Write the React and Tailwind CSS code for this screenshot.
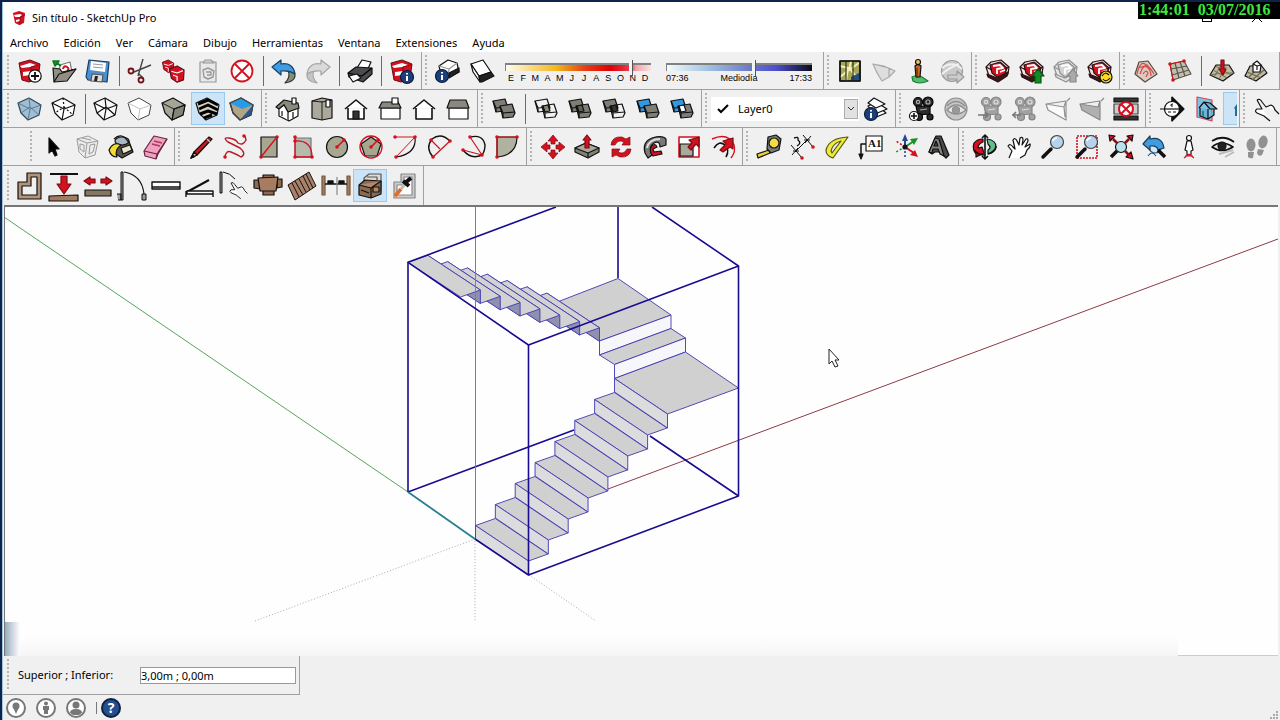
import { useState } from 'react'
import clsx from 'clsx'

const RED = '#d3111f'

const cube = 'M5 11 16 6 28 13 26 23 15 28 8 21Z'
const cubeEdges = 'M5 11 17 17 28 13M17 17 15 28'
const cubeBack = 'M16 6 17 15 8 21M17 15 26 23'
const house = 'M6 17 17 8 28 17M9 16V27H25V16'

function Logo() {
  return (
    <g>
      <path d="M6 9 17 6 27 10 25 25 16 28 9 26Z" fill={RED} stroke="#5d1217" strokeWidth="1" />
      <path d="M7 12 17 9 23 11 17 13 9 14ZM10 18 18 17 18 21 10 22Z" fill="#fff" stroke="none" />
      <path d="M18 13 26 11M18 13V27" stroke="#8f0d17" />
    </g>
  )
}

function SmallLogo({ x, y, size }) {
  return (
    <g transform={`translate(${x} ${y}) scale(${size})`}>
      <path d="M1 5 14 0 26 7 25 24 14 28 4 21Z" fill={RED} stroke="#5d1217" strokeWidth="2" />
      <path d="M4 9 14 12 24 8M7 16 14 18V26" stroke="#fff" strokeWidth="2" />
    </g>
  )
}

function InfoBadge({ x, y }) {
  return (
    <g>
      <circle cx={x} cy={y} r="6.5" fill="#1c3f7c" stroke="#0c1b38" />
      <path d={`M${x} ${y - 1}v5M${x} ${y - 4}v1.6`} stroke="#fff" strokeWidth="2" />
    </g>
  )
}

function Package({ muted }) {
  return (
    <g stroke={muted ? '#8f8f8f' : '#2a1113'}>
      <path d="M5 13 10 8 20 6 28 13 27 20 17 27 8 22Z" fill={muted ? '#e6e6e6' : '#f3e4e4'} />
      <path d="M9 11 19 8 26 14 24 20 16 23 11 19Z" fill={muted ? '#d3d3d3' : RED} />
      <path d="M12 12 19 11 22 14 16 15V20M19 18 24 16" stroke="#fff" strokeWidth="1.8" />
      <path d="M6 20 16 24 27 18 26 22 17 28 7 23Z" fill={muted ? '#ddd' : '#3b1517'} />
      <path d="M5 13 11 16M28 13 24 15" />
    </g>
  )
}

function CameraMan({ muted }) {
  const fill = muted ? '#a2a2a2' : '#2b2b2b'
  return (
    <g fill={fill} stroke={muted ? '#858585' : '#000'}>
      <circle cx="13" cy="10" r="4.5" />
      <circle cx="23" cy="10" r="5" />
      <path d="M11 14 25 14 25 22 13 23Z" />
      <circle cx="14" cy="25" r="3.5" />
      <circle cx="25" cy="25" r="3" />
      <circle cx="13" cy="10" r="1.6" stroke={muted ? '#ddd' : '#aaa'} />
      <circle cx="23" cy="10" r="2" stroke={muted ? '#ddd' : '#aaa'} />
      <path d="M15 18 22 17" stroke={muted ? '#ddd' : '#aaa'} />
    </g>
  )
}

function Dots({ points }) {
  return points.map(([x, y]) => <circle key={`${x}-${y}`} cx={x} cy={y} r="1.8" fill={RED} stroke="none" />)
}

function Magnifier() {
  return (
    <g>
      <path d="M15 19 7 27" strokeWidth="3.5" strokeLinecap="round" />
      <circle cx="21" cy="12" r="6.5" fill="#b5d3ec" stroke="#444" />
      <path d="M17 11q1-3 4-3" stroke="#fff" strokeWidth="1.6" />
    </g>
  )
}

function SolidPair({ back, front, union }) {
  return (
    <g>
      <path d="M6 9 18 7 21 16 18 19 9 20Z" fill={back} />
      <path d="M6 9 9 16 21 15M9 16V20" />
      <path d="M13 14 25 12 28 21 26 25 16 26Z" fill={front} />
      <path d="M13 14 16 21 28 20M16 21V26" />
      {union && <path d="M14 14 19 13 21 19 16 20Z" fill={union} />}
    </g>
  )
}

const HAND = 'M7 28 10 21 6 16Q8 13 11 17L13 19 11 10Q13 7 15 11L17 15 18 8Q21 6 21 10L20 15 24 9Q26 8 26 11L23 17 28 14Q29 17 25 20L23 25 18 28'
const POINT_HAND = 'M8 8Q11 6 13 10L17 15 22 13Q25 14 26 18L30 22M8 8 13 17 8 17Q5 19 8 21L15 24 21 29'

const ICONS = {
  new: (
    <>
      <Logo />
      <circle cx="22" cy="22" r="6.2" fill="#fff" />
      <path d="M22 18v8M18 22h8" strokeWidth="1.8" />
    </>
  ),
  open: (
    <>
      <path d="M13 11 23 8 25 18 12 20Z" fill="#fff" stroke="#777" />
      <path d="M16 15Q17 11 20 13T20 17" stroke={RED} strokeWidth="2" />
      <path d="M6 14 13 15 15 18 29 15 20 27 7 28Z" fill="#918f84" />
      <path d="M7 28 12 20 29 15" />
      <path d="M14 12 10 9M6 7 12 7 8 12Z" fill="#169c2c" stroke="#0d7a1f" strokeWidth="1.6" />
    </>
  ),
  save: (
    <>
      <path d="M8 6 28 8 26 28 7 26 5 23Z" fill="#4d90d0" stroke="#173a63" />
      <path d="M10 7 25 9 24 18 9 16Z" fill="#fff" stroke="none" />
      <path d="M12 10 22 11M12 13 22 14" stroke="#999" />
      <path d="M11 20 22 21 21 28 10 27Z" fill="#ddd" stroke="#555" />
      <path d="M14 22 17 22 16 27 13 27Z" fill="#222" stroke="none" />
    </>
  ),
  cut: (
    <>
      <path d="M20 5 15 22M28 11 11 18M15 19 20 24" stroke="#444" strokeWidth="1.4" />
      <circle cx="8" cy="17" r="2.5" stroke="#741018" strokeWidth="1.8" />
      <circle cx="18" cy="26" r="2.5" stroke="#741018" strokeWidth="1.8" />
    </>
  ),
  copy: (
    <>
      <SmallLogo x="5" y="6" size="0.45" />
      <SmallLogo x="12" y="12" size="0.58" />
    </>
  ),
  paste: (
    <g stroke="#999">
      <path d="M9 8H25V28H9Z" fill="#e8e8e8" />
      <path d="M12 9 14 6H20L23 9Z" fill="#ccc" />
      <path d="M12 16 17 14 23 17 22 23 17 25 13 23ZM15 18 20 18V21L16 21" strokeWidth="1.4" />
    </g>
  ),
  erase: (
    <g stroke={RED} strokeWidth="1.8">
      <circle cx="17" cy="17" r="10.5" fill="#fff" />
      <path d="M10 10 24 24M24 10 10 24" />
    </g>
  ),
  undo: (
    <>
      <path d="M27 17Q31 27 18 29 24 23 21 16Z" fill="#7f9176" stroke="#333" />
      <path d="M5 13 14 6V10Q26 8 28 20 22 16 14 17V21Z" fill="#3f9be2" stroke="#174064" />
    </>
  ),
  redo: (
    <>
      <path d="M7 17Q3 27 16 29 10 23 13 16Z" fill="#c5c5c5" stroke="#a5a5a5" />
      <path d="M29 13 20 6V10Q8 8 6 20 12 16 20 17V21Z" fill="#dadada" stroke="#a5a5a5" />
    </>
  ),
  print: (
    <>
      <path d="M14 14 19 6 28 8 24 17Z" fill="#fff" />
      <path d="M5 19 13 13 29 14V20L20 28 6 23Z" fill="#4b4b50" />
      <path d="M5 19 19 22 29 14" stroke="#000" />
      <path d="M6 22 14 20 18 24 10 28Z" fill="#fff" />
    </>
  ),
  modelInfo: (
    <>
      <Logo />
      <InfoBadge x={22} y={23} />
    </>
  ),
  shadowInfo: (
    <>
      <path d="M8 12 17 6 26 9 28 18 17 23 10 20Z" fill="#fff" />
      <path d="M8 12 18 15 26 9M18 15 17 23" stroke="#999" />
      <path d="M18 19 28 14 28 18 18 24Z" fill="#222" />
      <InfoBadge x={11} y={22} />
    </>
  ),
  shadow: (
    <>
      <path d="M6 10 18 6 26 18 14 22Z" fill="#fff" />
      <path d="M6 10 14 22 15 28 8 18Z" fill="#fff" />
      <path d="M14 22 26 18 29 22 17 28 15 28Z" fill="#222" />
    </>
  ),
  map: (
    <>
      <path d="M7 7H27V27H7Z" fill="#a5a757" />
      <path d="M7 23 17 15 26 26M18 7 16 16 26 9M7 12 15 14 13 27" stroke="#f1efb5" strokeWidth="2" />
      <path d="M18 23 26 19V27H18Z" fill="#254f80" stroke="none" />
      <path d="M13 7V27M20 7V27" stroke="#303120" />
      <path d="M7 7H27V27H7Z" strokeWidth="1.6" />
    </>
  ),
  terrain: <path d="M6 10 17 12 28 17 22 23 15 27Q9 18 6 10ZM6 10 22 14 28 17M22 14 22 23" fill="#dedede" stroke="#aaa" />,
  photo: (
    <>
      <path d="M11 23Q16 20 21 23L27 27Q18 31 12 27Z" fill="#51bd6d" stroke="#167d34" />
      <circle cx="17" cy="8" r="2.5" fill="#efc26b" />
      <path d="M14 12Q17 9 20 12L19 23H15Z" fill="#c96523" />
      <path d="M16 14V24" stroke="#612d0a" />
    </>
  ),
  earth: (
    <g stroke="#999">
      <circle cx="17" cy="17" r="10.5" fill="#cacaca" />
      <path d="M7 14Q17 6 27 15M7 20Q15 13 24 10" stroke="#f0f0f0" strokeWidth="2" />
      <path d="M13 21H22V17L29 23 22 29V25H13Z" fill="#ccc" />
    </g>
  ),
  getModels: <Package />,
  shareModel: (
    <>
      <Package />
      <path d="M20 29V22H17L23 15 29 22H26V29Z" fill="#118c25" stroke="#075714" />
    </>
  ),
  shareComponent: (
    <>
      <Package muted />
      <path d="M21 28V22H18L24 15 29 22H27V28Z" fill="#aaa" stroke="#888" />
    </>
  ),
  extensionWarehouse: (
    <>
      <Package />
      <circle cx="23" cy="23" r="6" fill="#ffda24" />
      <path d="M19 22Q22 17 26 21M27 24Q23 29 20 25" />
    </>
  ),
  contours: (
    <>
      <path d="M6 20 10 8 19 7 28 20 16 28Z" fill="#d8cdbd" stroke="#5b4640" />
      <path d="M8 20Q11 7 16 10T25 20M11 20Q14 10 18 13T22 22M14 20Q17 15 19 19L17 23M9 14 19 11" stroke="#d6464d" strokeWidth="1.2" />
    </>
  ),
  scratch: (
    <>
      <path d="M7 10 21 7 28 20 10 26Z" fill="#c3bfa8" stroke="#555" />
      <path d="M12 9 16 24M17 8 22 22M8 15 24 12M9 21 26 16" stroke="#555" />
      <path d="M10 26 7 10 21 7" stroke={RED} />
      <Dots points={[[7, 10], [21, 7], [10, 26]]} />
    </>
  ),
  stamp: (
    <>
      <path d="M5 21 11 11 24 11 29 19 18 27Z" fill="#bfb99d" />
      <path d="M9 23 16 11M14 25 21 13M8 16 22 24M11 12 26 21M5 21 17 19 29 19" stroke="#6c6957" strokeWidth="0.9" />
      <path d="M16 6H19V15H21L18 21 14 15H16Z" fill={RED} stroke="#7d0d14" />
    </>
  ),
  drape: (
    <>
      <path d="M6 22 11 12 22 11 28 19 17 27Z" fill="#bfb99d" />
      <path d="M9 24 16 17M13 26 25 16M8 18 22 24" stroke="#6c6957" />
      <path d="M14 18 14 10 18 7 22 11 21 18Z" fill="#fff" />
      <path d="M14 10 18 12 22 11M18 12V16" />
    </>
  ),
  xray: (
    <>
      <path d={cube} fill="#9fbed5" stroke="#2d4658" />
      <path d={`${cubeEdges}${cubeBack}`} stroke="#557286" strokeWidth="0.9" />
    </>
  ),
  backEdges: (
    <>
      <path d={cube} fill="#fff" />
      <path d={cubeEdges} />
      <path d={cubeBack} strokeDasharray="2 2" />
    </>
  ),
  wireframe: (
    <>
      <path d={cube} fill="#fafafa" />
      <path d={`${cubeEdges}${cubeBack}`} />
    </>
  ),
  hiddenLine: (
    <>
      <path d={cube} fill="#fff" stroke="#444" strokeWidth="1" />
      <path d={cubeEdges} stroke="#bbb" strokeWidth="0.9" />
    </>
  ),
  shaded: (
    <>
      <path d={cube} fill="#a5a496" />
      <path d="M17 17 28 13 26 23 15 28Z" fill="#84837a" />
      <path d={cubeEdges} strokeWidth="0.9" />
    </>
  ),
  textured: (
    <>
      <path d={cube} fill="#d5d0c4" />
      <path d="M7 12 17 8 27 13M8 17 17 13 27 18M9 22 17 19 26 22M13 26 21 23" stroke="#000" strokeWidth="3" />
    </>
  ),
  monochrome: (
    <>
      <path d={cube} fill="#b3a584" />
      <path d="M5 11 16 6 28 13 17 17Z" fill="#289be8" stroke="none" />
      <path d="M28 13 26 23 15 28Z" fill="#275b91" stroke="none" />
      <path d={cube} stroke="#3d4954" />
    </>
  ),
  iso: (
    <>
      <path d="M8 17 17 20 27 15V24L18 29 8 24Z" fill="#fff" />
      <path d="M5 15 13 8 27 11 28 16 17 20 13 13 8 17Z" fill="#8a897f" />
      <path d="M8 17 13 13 17 20V29M21 6H25V12H21ZM11 19V24M22 20V26" fill="#fff" />
    </>
  ),
  top: (
    <>
      <path d="M7 9 17 6 27 8V26L17 28 7 26Z" fill="#aaa99b" />
      <path d="M17 9V28M7 9 17 10 27 8" strokeWidth="0.9" />
      <path d="M21 8H25V15H21Z" fill="#fff" />
    </>
  ),
  front: (
    <>
      <path d={house} fill="#fff" strokeWidth="1.6" />
      <path d="M14 19H20V27H14Z" fill="#333" />
    </>
  ),
  right: (
    <>
      <path d="M8 16H27V27H8Z" fill="#fff" />
      <path d="M9 10H25L28 16H6Z" fill="#8a897f" />
      <path d="M19 6H25V12H19Z" fill="#fff" />
    </>
  ),
  back: <path d={house} fill="#fff" strokeWidth="1.6" />,
  left: (
    <>
      <path d="M8 16H27V27H8Z" fill="#fff" />
      <path d="M9 8H25L28 16H6Z" fill="#8a897f" />
    </>
  ),
  outerShell: <SolidPair back="#7f7e76" front="#7f7e76" />,
  intersect: <SolidPair back="none" front="none" union="#88877e" />,
  union: <SolidPair back="#7f7e76" front="#7f7e76" union="#63625b" />,
  subtract: <SolidPair back="#7f7e76" front="none" union="#333" />,
  trim: <SolidPair back="#3398e0" front="#7f7e76" />,
  split: <SolidPair back="#3398e0" front="#7f7e76" union="#fff" />,
  layers: (
    <>
      <path d="M9 18 19 14 27 21 15 26Z" fill="#fff" />
      <path d="M9 14 17 10 28 17 16 22Z" fill="#fff" />
      <path d="M9 11 15 6 26 12 17 16Z" fill="#fff" />
      <InfoBadge x={12} y={22} />
    </>
  ),
  cameraAdd: (
    <>
      <CameraMan />
      <circle cx="9" cy="24" r="4.5" fill="#fff" />
      <path d="M9 21v6M6 24h6" strokeWidth="1.6" />
    </>
  ),
  cameraLook: (
    <g stroke="#8f8f8f">
      <circle cx="17" cy="17" r="11" fill="#c6c6c6" />
      <path d="M8 18Q17 8 27 18Q17 26 8 18Z" fill="#e5e5e5" strokeWidth="1.6" />
      <circle cx="17" cy="18" r="3.5" fill="#999" />
      <path d="M8 14Q17 5 26 14" strokeWidth="1.6" />
    </g>
  ),
  cameraTrack: (
    <>
      <CameraMan muted />
      <path d="M5 23H14M12 20 15 23 12 26" stroke="#777" strokeWidth="1.6" />
    </>
  ),
  cameraRoll: (
    <>
      <CameraMan muted />
      <path d="M5 23H14M9 20 6 23 9 26" stroke="#777" strokeWidth="1.6" />
    </>
  ),
  frustum: <path d="M5 12 25 9 25 28 7 18ZM5 12 23 15 25 9M23 15 24 25M26 9 29 6" fill="#fafafa" stroke="#909090" />,
  frustumSolid: <path d="M5 12 25 9 25 28 7 18ZM26 9 29 6M5 12 23 15 25 9" fill="#b0b0b0" stroke="#888" />,
  cameraClear: (
    <>
      <path d="M5 6H29V10H5ZM5 24H29V28H5Z" fill="#333" />
      <path d="M5 12H11V22H5ZM23 12H29V22H23Z" fill="#ccc" stroke="#444" />
      <circle cx="17" cy="17" r="7" fill="#fff" stroke={RED} strokeWidth="2" />
      <path d="M12 12 22 22M22 12 12 22" stroke={RED} strokeWidth="2" />
    </>
  ),
  section: (
    <>
      <path d="M17 5 29 17 17 29Z" fill="#111" />
      <path d="M17 5V29M5 17H29" />
      <circle cx="17" cy="17" r="7.5" fill="#fff" />
      <path d="M9 17H25" />
      <path d="M18 12Q15 12 16 14H18M13 20h3M18 20h3" strokeWidth="1" />
    </>
  ),
  sectionPlanes: (
    <>
      <path d="M8 5 23 8V29L8 25Z" fill="#7fc3e4" stroke="#d04a5c" />
      <path d="M10 16 15 10 21 17 28 17 21 11 15 10M11 16V24L19 27V17M25 17V23L19 27" fill="#69b4da" />
      <path d="M14 19V25" stroke="#1d4d66" />
    </>
  ),
  pointHand: <path d={POINT_HAND} fill="#fff" />,
  select: <path d="M13 8V23L16 20 19 26 21 25 19 19H23Z" fill="#000" />,
  component: (
    <g stroke="#9b9b9b" strokeWidth="1">
      <path d="M7 9 18 6 28 11 25 25 15 28 9 22Z" fill="#ececec" />
      <path d="M7 9 17 13 28 11M17 13 15 28M10 14V19L14 22V15ZM20 15 25 14 23 22 19 24ZM12 8 21 10" />
    </g>
  ),
  paint: (
    <>
      <path d="M12 12 24 9 29 22 18 28 12 24Z" fill="#55554d" />
      <ellipse cx="18" cy="11" rx="7" ry="4" fill="#a9b7c4" />
      <path d="M17 18 26 15 28 20 19 24Z" fill="#eae7ca" />
      <path d="M5 20Q9 11 17 15 10 20 13 27 7 27 5 20Z" fill="#f3dc32" />
      <path d="M10 9Q18 1 25 13" />
    </>
  ),
  eraser: (
    <>
      <path d="M6 21 16 6 29 9 20 24 18 29 7 26Z" fill="#f3a0c0" stroke="#63263d" />
      <path d="M6 21 19 24 29 9M19 24 18 29" stroke="#63263d" />
      <path d="M16 11 24 13M14 14 22 16" stroke="#a63863" strokeWidth="1.4" />
    </>
  ),
  pencil: (
    <>
      <path d="M7 28 10 22 25 7 28 9 13 25Z" fill={RED} />
      <path d="M7 28 10 22 13 25Z" fill="#d9bb86" />
      <path d="M7 28 9 25 10 27Z" fill="#111" />
      <path d="M23 9 26 12" stroke="#f0b0b4" />
    </>
  ),
  freehand: (
    <>
      <path d="M7 27Q8 20 13 22T23 27Q29 24 22 18L10 12Q4 7 11 8T20 13Q25 16 28 10L27 6" stroke="#b71c28" strokeWidth="1.4" />
      <Dots points={[[7, 27], [26, 6]]} />
    </>
  ),
  rectangle: (
    <>
      <path d="M9 7H25V27H9Z" fill="#a7a791" />
      <path d="M9 27 25 7" stroke={RED} strokeWidth="1.4" />
      <Dots points={[[9, 27], [25, 7]]} />
    </>
  ),
  rotatedRectangle: (
    <>
      <path d="M9 8H25V27H9Z" fill="#b7b9ac" stroke="#777" />
      <path d="M9 7V27H26Q26 10 9 11" stroke={RED} strokeWidth="1.3" />
      <Dots points={[[9, 7], [9, 27], [26, 27], [9, 11]]} />
    </>
  ),
  circle: (
    <>
      <circle cx="17" cy="17" r="10.5" fill="#a7a791" />
      <path d="M17 17 24 10" stroke={RED} strokeWidth="1.6" />
      <Dots points={[[17, 17], [24, 10]]} />
    </>
  ),
  polygon: (
    <>
      <path d="M17 7 27 14 23 26H11L7 14Z" fill="#a7a791" />
      <circle cx="17" cy="17" r="11" stroke={RED} strokeWidth="1.3" />
      <path d="M17 17 24 10" stroke={RED} strokeWidth="1.6" />
      <Dots points={[[17, 17], [24, 10]]} />
    </>
  ),
  arc: (
    <>
      <path d="M27 7Q29 24 8 27" />
      <path d="M7 7H27L8 27" stroke={RED} strokeWidth="1" />
      <Dots points={[[7, 7], [27, 7], [8, 27]]} />
    </>
  ),
  arc2: (
    <>
      <path d="M11 27Q3 18 10 9Q19 2 28 11" strokeWidth="1.4" />
      <path d="M11 27 28 11M9 10 18 19" stroke={RED} strokeWidth="1.2" />
      <Dots points={[[11, 27], [28, 11], [9, 10]]} />
    </>
  ),
  arc3: (
    <>
      <path d="M14 7Q27 4 29 15 29 21 26 25 15 30 7 20" strokeWidth="1.4" />
      <path d="M14 7 26 25 7 20" stroke={RED} strokeWidth="1.2" />
      <Dots points={[[14, 7], [26, 25], [7, 20]]} />
    </>
  ),
  pie: (
    <>
      <path d="M7 7H27Q27 25 7 27Z" fill="#b1b1a0" />
      <path d="M7 27V7H27" stroke={RED} />
      <Dots points={[[7, 7], [27, 7], [7, 27]]} />
    </>
  ),
  move: (
    <path
      d="M17 5 22 11H19V14H15V11H12ZM17 29 12 23H15V20H19V23H22ZM5 17 11 12V15H14V19H11V22ZM29 17 23 22V19H20V15H23V12Z"
      fill={RED}
      stroke="#7d0d14"
      strokeWidth="0.7"
    />
  ),
  pushPull: (
    <>
      <path d="M5 18 16 13 29 18V22L18 28 5 22Z" fill="#818175" />
      <path d="M5 18 18 23 29 18L16 13ZM18 23V28" fill="#aaa99b" />
      <path d="M17 5 21 10H19V18H15V10H13Z" fill={RED} stroke="#7d0d14" />
    </>
  ),
  rotate: (
    <g fill={RED} stroke="#7d0d14" strokeWidth="0.7">
      <path d="M7 15Q8 6 18 7L22 9 26 7V15H18L20 12Q14 9 11 15Z" />
      <path d="M27 19Q26 28 16 27L12 25 8 27V19H16L14 22Q20 25 23 19Z" />
    </g>
  ),
  followMe: (
    <>
      <path d="M7 23Q4 12 14 8 25 5 28 9L28 15 22 17Q22 10 16 13 10 17 14 25L10 28Z" fill="#777a75" />
      <path d="M9 18Q11 9 22 9" stroke="#ddd" strokeWidth="2" />
      <path d="M13 17Q17 12 19 17L15 19 16 22 23 21 24 24 15 26Q11 22 13 17Z" fill={RED} />
    </>
  ),
  scale: (
    <>
      <path d="M7 7H27V27H7Z" fill="#fff" stroke={RED} strokeWidth="1.6" />
      <path d="M8 14H21V26H8Z" fill="#aaa99b" />
      <path d="M16 17 20 13 17 10 27 7V17L24 14 19 20Z" fill={RED} stroke="#7d0d14" />
    </>
  ),
  offset: (
    <>
      <path d="M6 9Q22 2 28 15 30 22 25 28" stroke={RED} strokeWidth="1.4" />
      <path d="M8 18Q13 10 19 15 24 20 20 27" strokeWidth="1.6" />
      <path d="M14 20 20 14 17 11 27 8V19L24 17 17 22Z" fill={RED} stroke="#7d0d14" />
    </>
  ),
  tape: (
    <>
      <path d="M6 28 5 24 17 20 18 23Z" fill="#e9cf35" />
      <path d="M16 7 24 5 29 9 27 20 19 23 15 19Z" fill="#777a7b" />
      <circle cx="22" cy="13" r="5" fill="#f2db47" />
    </>
  ),
  dimension: (
    <>
      <path d="M9 22 22 9M5 15 16 28M17 5 27 17M7 21H13M6 25 12 18M18 10H24M19 13 25 6" strokeWidth="1" />
      <path d="M8 8Q13 6 12 10 16 13 11 16" strokeWidth="1.4" />
      <Dots points={[[16, 28], [27, 17]]} />
    </>
  ),
  protractor: (
    <path d="M6 20Q9 8 28 7L13 28Q6 26 6 20ZM11 21Q13 13 21 11L12 23Z" fill="#eeec3b" fillRule="evenodd" stroke="#555512" />
  ),
  textLabel: (
    <>
      <path d="M12 6H28V21H12Z" fill="#fff" />
      <text x="14" y="17" fontSize="11" fontFamily="Liberation Serif" fontWeight="bold" fill="#111" stroke="none">A1</text>
      <path d="M12 14H7V25" strokeWidth="1.5" />
      <path d="M5 24H9L7 29Z" fill="#111" />
    </>
  ),
  axes: (
    <>
      <path d="M17 17V9" stroke="#244a96" strokeWidth="2" />
      <path d="M14 11 17 4 20 11Z" fill="#244a96" stroke="none" />
      <path d="M17 17 26 11" stroke="#14942b" strokeWidth="2" />
      <path d="M22 9 30 8 26 15Z" fill="#14942b" stroke="none" />
      <path d="M17 17 26 23" stroke={RED} strokeWidth="2" />
      <path d="M27 20 30 27 22 25Z" fill={RED} stroke="none" />
      <path d="M17 17V29" stroke="#244a96" strokeDasharray="2 2" strokeWidth="1.6" />
      <path d="M17 17 8 11" stroke={RED} strokeDasharray="2 2" strokeWidth="1.6" />
      <path d="M17 17 8 22" stroke="#14942b" strokeDasharray="2 2" strokeWidth="1.6" />
      <circle cx="17" cy="17" r="2" fill="#111" />
    </>
  ),
  text3d: (
    <>
      <path d="M7 22 14 6 19 6 27 25 24 28 18 22 13 22 10 24Z" fill="#4b4b4b" />
      <path d="M7 22 13 8 17 9 22 26 18 24 16 19 11 19 10 23ZM12 16 16 16 14 11Z" fill="#85857f" fillRule="evenodd" />
    </>
  ),
  orbit: (
    <>
      <path d="M6 13Q9 9 15 9V12Q10 14 10 18L14 17 16 23 8 27V24Q4 19 6 13Z" fill={RED} />
      <path d="M19 9Q28 10 28 17 27 23 20 24V20Q24 18 20 14Z" fill="#65bb8a" />
      <path d="M6 20Q10 25 17 25M28 16Q28 21 20 24" strokeWidth="1.6" />
      <path d="M17 5V29M14 8 17 5 20 8M14 26 17 29 20 26" strokeWidth="1.6" />
    </>
  ),
  pan: <path d={HAND} fill="#fff" />,
  zoom: <Magnifier />,
  zoomWindow: (
    <>
      <path d="M7 6H27V28H7Z" stroke={RED} strokeDasharray="2 1" strokeWidth="1.6" />
      <Magnifier />
    </>
  ),
  zoomExtents: (
    <>
      <path d="M13 21 7 27" strokeWidth="3.5" />
      <circle cx="17" cy="17" r="5.5" fill="#b7e3ee" />
      <path d="M5 5 11 6 6 11ZM29 5 23 6 28 11ZM29 29 22 27 27 22Z" fill={RED} />
      <path d="M9 9 13 13M25 9 21 13M25 25 21 21" stroke="#8f0d17" strokeWidth="2.5" />
    </>
  ),
  previous: (
    <>
      <circle cx="17" cy="17" r="6" fill="#d3e6f3" stroke="#33566e" />
      <path d="M5 14 12 6V9Q24 6 26 18L20 20Q19 15 12 16V20Z" fill="#429bdc" stroke="#173c5c" />
      <path d="M20 20 27 27" strokeWidth="3.5" />
      <path d="M10 26Q14 20 18 26" stroke="#1f5d91" />
    </>
  ),
  position: (
    <>
      <circle cx="17" cy="8" r="2.5" fill="#fff" />
      <path d="M15 11H19L21 20 19 21V25H15V21L13 20Z" fill="#fff" />
      <path d="M17 24 12 28M17 24 22 28M13 26H21" stroke={RED} />
    </>
  ),
  lookAround: (
    <>
      <path d="M6 11Q17 4 28 12" strokeWidth="1.8" />
      <path d="M6 17Q15 9 27 17Q16 24 6 17Z" fill="#e8e8e8" strokeWidth="1.6" />
      <circle cx="16" cy="16" r="4" fill="#222" />
      <circle cx="15" cy="15" r="1" fill="#fff" />
      <path d="M13 24 27 20M19 27 28 22" stroke="#bbb" strokeWidth="2" />
    </>
  ),
  walk: (
    <g fill="#919191" stroke="none">
      <ellipse cx="11" cy="15" rx="4.5" ry="6.5" />
      <path d="M8 22 14 22 13 28Q10 29 8 27Z" />
      <ellipse cx="23" cy="12" rx="4.5" ry="6.5" transform="rotate(15 23 12)" />
      <path d="M18 19 24 20 22 25Q18 27 17 23Z" />
    </g>
  ),
  walls: <path d="M5 13H14V4H28V30H5ZM9 17V26H24V8H18V17Z" fill="#b09379" fillRule="evenodd" />,
  height: (
    <>
      <path d="M3 5H31" strokeWidth="2" />
      <path d="M14 7H20V15H24L17 25 10 15H14Z" fill={RED} stroke="#7d0d14" />
      <path d="M2 27 31 26V32H2Z" fill="#a37b61" />
    </>
  ),
  width: (
    <>
      <path d="M3 12 9 8V10H14V14H9V16ZM31 12 25 8V10H20V14H25V16Z" fill={RED} stroke="#7d0d14" />
      <path d="M4 21H30V27H4Z" fill="#857762" />
    </>
  ),
  door: (
    <>
      <path d="M6 3H8V31H6ZM2 25H6V31H3M27 25H31V31H27Z" fill="#999" strokeWidth="1" />
      <path d="M9 3Q27 6 29 25" />
    </>
  ),
  window: <path d="M3 13H31V20H3ZM3 18H31M15 20H18" fill="#fff" strokeWidth="1.4" />,
  opening: (
    <>
      <path d="M4 23 26 11" strokeWidth="2" />
      <path d="M4 22H30V25H4ZM3 22V28M30 22V28" fill="#fff" strokeWidth="1.4" />
    </>
  ),
  doorHand: (
    <>
      <path d="M3 3H5V24H3Z" fill="#999" strokeWidth="1" />
      <path d="M6 3Q13 4 18 10" strokeWidth="1" />
      <g transform="translate(8 8) scale(0.75)">
        <path d={POINT_HAND} fill="#fff" />
      </g>
    </>
  ),
  table: (
    <>
      <path d="M12 6H23V12H12ZM12 21H23V26H12ZM3 11 9 11V20L3 19ZM31 10 26 10V19L31 18Z" fill="#91694f" />
      <path d="M7 9 27 8 25 22 9 22Z" fill="#a77c60" />
    </>
  ),
  stairs: (
    <>
      <path d="M3 16 24 3 31 17 10 31Z" fill="#a98168" strokeWidth="1" />
      <path d="M7 14 14 28M10 12 18 26M14 10 21 23M18 7 25 21M21 5 28 19" strokeWidth="1" />
    </>
  ),
  beam: (
    <>
      <path d="M3 7H6V26H3ZM28 7H31V26H28Z" fill="#a27e62" stroke="#76563d" />
      <path d="M6 15H28M9 14H14V12H9ZM20 14H25V12H20Z" fill="#111" strokeWidth="1.4" />
      <path d="M18 8V26" stroke="#888" />
    </>
  ),
  furniture: (
    <>
      <path d="M16 5H28V22H11V9Z" fill="#dedbd4" stroke="#555" />
      <path d="M6 16 12 11 28 12V25L18 29 6 26Z" fill="#8c6a50" />
      <path d="M6 16 18 19 28 12M18 19V29M8 21 16 24M20 18H26V23H20Z" fill="#b4886b" />
      <path d="M14 8H24V11" stroke="#555" />
    </>
  ),
  picker: (
    <>
      <path d="M7 13H14V5H28V29H7Z" fill="#ccc" stroke="#888" />
      <path d="M10 16H17V8H25V26H10Z" fill="#fff" stroke="#888" />
      <path d="M8 27 14 20" stroke="#e16c27" strokeWidth="3.5" />
      <path d="M14 20 18 15" stroke="#bbb" strokeWidth="3" />
      <path d="M16 12 22 17M18 14 24 9" strokeWidth="4" />
    </>
  ),
}

const ROWS = {
  files: [
    ['new', 'Nuevo'], ['open', 'Abrir'], ['save', 'Guardar'], null,
    ['cut', 'Cortar'], ['copy', 'Copiar'], ['paste', 'Pegar'], ['erase', 'Borrar'], null,
    ['undo', 'Deshacer'], ['redo', 'Rehacer'], null,
    ['print', 'Imprimir'], null, ['modelInfo', 'Información del modelo'],
  ],
  location: [['map', 'Añadir ubicación'], ['terrain', 'Mostrar terreno'], ['photo', 'Texturas fotográficas'], ['earth', 'Google Earth']],
  warehouse: [['getModels', 'Obtener modelos'], ['shareModel', 'Compartir modelo'], ['shareComponent', 'Compartir componente'], ['extensionWarehouse', 'Extension Warehouse']],
  sandbox: [['contours', 'Desde contornos'], ['scratch', 'Desde cero'], null, ['stamp', 'Estampar'], ['drape', 'Proyectar']],
  styles: [['xray', 'Rayos X'], ['backEdges', 'Aristas posteriores'], null, ['wireframe', 'Alambre'], ['hiddenLine', 'Líneas ocultas'], ['shaded', 'Sombreado'], ['textured', 'Sombreado con texturas', true], ['monochrome', 'Monocromo']],
  views: [['iso', 'Isométrica'], ['top', 'Planta'], ['front', 'Alzado'], ['right', 'Derecha'], ['back', 'Posterior'], ['left', 'Izquierda']],
  solids: [['outerShell', 'Carcasa exterior'], null, ['intersect', 'Intersección'], ['union', 'Unión'], ['subtract', 'Sustraer'], ['trim', 'Recortar'], ['split', 'Dividir']],
  camera: [['cameraAdd', 'Crear cámara'], ['cameraLook', 'Mirar por la cámara'], ['cameraTrack', 'Desplazar cámara'], ['cameraRoll', 'Girar cámara'], ['frustum', 'Líneas de visión'], ['frustumSolid', 'Volumen de visión'], ['cameraClear', 'Salir de cámara']],
  section: [['section', 'Plano de sección'], ['sectionPlanes', 'Mostrar planos']],
  main: [['select', 'Seleccionar'], ['component', 'Crear componente'], ['paint', 'Pintar'], ['eraser', 'Goma']],
  draw: [['pencil', 'Línea'], ['freehand', 'Mano alzada'], ['rectangle', 'Rectángulo'], ['rotatedRectangle', 'Rectángulo girado'], ['circle', 'Círculo'], ['polygon', 'Polígono'], ['arc', 'Arco'], ['arc2', 'Arco por 2 puntos'], ['arc3', 'Arco por 3 puntos'], ['pie', 'Sector']],
  edit: [['move', 'Mover'], ['pushPull', 'Empujar/tirar'], ['rotate', 'Rotar'], ['followMe', 'Sígueme'], ['scale', 'Escala'], ['offset', 'Equidistancia']],
  construction: [['tape', 'Medir'], ['dimension', 'Acotación'], ['protractor', 'Transportador'], ['textLabel', 'Texto'], ['axes', 'Ejes'], ['text3d', 'Texto 3D']],
  navigation: [['orbit', 'Orbitar'], ['pan', 'Desplazar'], ['zoom', 'Zoom'], ['zoomWindow', 'Ventana de zoom'], ['zoomExtents', 'Ver modelo centrado'], ['previous', 'Anterior'], ['position', 'Situar cámara'], ['lookAround', 'Girar'], ['walk', 'Caminar']],
  architecture: [['walls', 'Muros'], ['height', 'Altura'], ['width', 'Anchura'], ['door', 'Puerta'], ['window', 'Ventana'], ['opening', 'Hueco'], ['doorHand', 'Editar puerta'], ['table', 'Mobiliario'], ['stairs', 'Escalera'], ['beam', 'Cota'], ['furniture', 'Insertar', true], ['picker', 'Cuentagotas']],
}

const MENU = ['Archivo', 'Edición', 'Ver', 'Cámara', 'Dibujo', 'Herramientas', 'Ventana', 'Extensiones', 'Ayuda']
const MONTHS = ['E', 'F', 'M', 'A', 'M', 'J', 'J', 'A', 'S', 'O', 'N', 'D']

function Tool({ icon, label, active }) {
  return (
    <button
      type="button"
      aria-label={label}
      className={clsx(
        'flex h-[33px] w-[34px] shrink-0 items-center justify-center',
        active && 'border border-[#99c9ef] bg-[#cce4f7]',
      )}
    >
      <svg viewBox="0 0 34 34" width="34" height="34" fill="none" stroke="#111" strokeWidth="1.2" strokeLinejoin="round" className="shrink-0">
        {ICONS[icon]}
      </svg>
    </button>
  )
}

function Tools({ items }) {
  return items.map((item, i) =>
    item ? (
      <Tool key={item[0]} icon={item[0]} label={item[1]} active={item[2]} />
    ) : (
      <span key={i} className="flex w-2 shrink-0 justify-center">
        <span className="h-[30px] w-px bg-[#6b6b6b]" />
      </span>
    ),
  )
}

function Grip() {
  return (
    <span className="w-[9px] shrink-0 pl-[3px]">
      <span className="block h-8 w-[2px] bg-[repeating-linear-gradient(to_bottom,#b4b4b4_0_2px,transparent_2px_4px)]" />
    </span>
  )
}

function Toolbar({ items = [], children, className }) {
  return (
    <div className={clsx('flex shrink-0 items-center border-r border-[#a0a0a0] pr-[2px]', className)}>
      <Grip />
      {children}
      <Tools items={items} />
    </div>
  )
}

function SunSlider({ label, value, onChange, className, children }) {
  return (
    <label className="flex w-[146px] shrink-0 flex-col pt-1">
      <input
        type="range"
        aria-label={label}
        value={value}
        onChange={(event) => onChange(Number(event.target.value))}
        className={clsx(
          'm-0 block h-2 w-full appearance-none border-t-2 border-l border-[#808080] [&::-webkit-slider-thumb]:h-4 [&::-webkit-slider-thumb]:w-1 [&::-webkit-slider-thumb]:appearance-none [&::-webkit-slider-thumb]:border-r [&::-webkit-slider-thumb]:border-[#555] [&::-webkit-slider-thumb]:bg-[#f4f4f4]',
          className,
        )}
      />
      <span className="flex justify-between pt-[2px] font-['Liberation_Sans'] text-[9px] leading-[10px]">
        {children}
      </span>
    </label>
  )
}

function ShadowToolbar() {
  const [month, setMonth] = useState(87)
  const [hour, setHour] = useState(60)

  return (
    <Toolbar className="w-[402px]">
      <Tool icon="shadowInfo" label="Ajustes de sombras" />
      <Tool icon="shadow" label="Mostrar sombras" />
      <div className="flex gap-[15px] pl-[6px]">
        <SunSlider
          label="Mes"
          value={month}
          onChange={setMonth}
          className="bg-[linear-gradient(to_right,#fffdf0,#f3b51c_35%,#e83c12_55%,#df0008_72%,#e83a49_85%,#f3a5ab_90%,#fae3e3)]"
        >
          {MONTHS.map((name, i) => (
            <span key={i} className="w-3 text-center">{name}</span>
          ))}
        </SunSlider>
        <SunSlider
          label="Hora"
          value={hour}
          onChange={setHour}
          className="bg-[linear-gradient(to_right,#f5fafc,#9cbfe0_30%,#6472c9_60%,#4c4fd0_75%,#0a0a18)]"
        >
          <span>07:36</span>
          <span>Mediodía</span>
          <span>17:33</span>
        </SunSlider>
      </div>
    </Toolbar>
  )
}

function LayerToolbar() {
  return (
    <Toolbar>
      <div className="flex h-6 w-[148px] items-center bg-white pl-[6px]">
        <svg viewBox="0 0 12 10" className="h-[10px] w-3" fill="none" stroke="#000" strokeWidth="2">
          <path d="M1 5 4 8 11 1" />
        </svg>
        <select aria-label="Capa" className="w-[115px] appearance-none bg-transparent pl-[9px] text-[11px] leading-5">
          <option>Layer0</option>
        </select>
        <span className="grid h-5 w-[14px] shrink-0 place-items-center border border-[#adadad] bg-[#e1e1e1]">
          <svg viewBox="0 0 8 6" className="h-[6px] w-2" fill="none" stroke="#333">
            <path d="M1 1 4 4 7 1" />
          </svg>
        </span>
      </div>
      <Tool icon="layers" label="Gestor de capas" />
    </Toolbar>
  )
}

function TitleBar() {
  return (
    <header className="flex h-[31px] items-center bg-white pl-[9px]">
      <svg viewBox="0 0 14 16" className="h-4 w-[14px]" fill="none">
        <path d="M1 3 7 1 13 3 12 13 7 15 3 13Z" fill={RED} />
        <path d="M2 5 8 4 10 5 8 7 3 7ZM4 10 8 9V11L4 12Z" fill="#fff" />
        <path d="M8 7 13 5M8 7V15" stroke="#8f0d17" />
      </svg>
      <h1 className="pl-[6px] leading-4">Sin título - SketchUp Pro</h1>
      <div className="ml-auto flex gap-10 pr-[18px] pb-[2px]">
        <button type="button" aria-label="Maximizar" className="h-[10px] w-[10px] border border-black" />
        <button type="button" aria-label="Cerrar">
          <svg viewBox="0 0 10 10" className="h-[10px] w-[10px]" stroke="#000">
            <path d="M0 0 10 10M10 0 0 10" />
          </svg>
        </button>
      </div>
    </header>
  )
}

const pts = (list) => list.map((p) => p.join(',')).join(' ')

// lower flight, drawn from the landing down to the first step
const LOWER_FLIGHT = [6, 5, 4, 3, 2, 1, 0].map((k) => {
  const x = 475.5 + 19.85 * k
  const y = 525.5 - 21 * k
  return {
    tread: pts([[x, y], [x + 19.85, y - 7], [x + 72.5, y + 28.5], [x + 53, y + 35.5]]),
    riser: pts([[x, y], [x + 53, y + 35.5], [x + 53, y + 49.5], [x, y + 13.5]]),
  }
})

// upper flight, the highest step goes last so it covers the others
const UPPER_FLIGHT = [6, 5, 4, 3, 2, 1, 0].map((k) => {
  const x = 408 + 19.85 * k
  const y = 262.3 + 6.3 * k
  return {
    tread: pts([[x, y], [x + 19.8, y - 7], [x + 72.4, y + 27.7], [x + 52.6, y + 34.7]]),
    riser: pts([[x + 19.8, y - 7], [x + 72.4, y + 27.7], [x + 72.4, y + 41.3], [x + 19.8, y + 6.6]]),
  }
})

function Viewport() {
  return (
    <svg
      viewBox="5 207 1273 449"
      preserveAspectRatio="xMidYMid slice"
      className="min-h-0 w-full flex-1 bg-[#fefefe]"
      role="img"
      aria-label="Modelo de escalera"
    >
      <defs>
        <linearGradient id="fade" x1="0" y1="0" x2="0" y2="1">
          <stop offset="0" stopColor="#fefefe" />
          <stop offset="1" stopColor="#f5f5f5" />
        </linearGradient>
        <linearGradient id="edge">
          <stop offset="0" stopColor="#8ba6b7" />
          <stop offset="0.5" stopColor="#ccd3dc" />
          <stop offset="1" stopColor="#fefefe" />
        </linearGradient>
      </defs>

      <rect x="4" y="636" width="1174" height="20" fill="url(#fade)" />
      <rect x="4" y="622" width="16" height="34" fill="url(#edge)" />
      <path d="M1178 655.5H1278" stroke="#ccc" />

      <path d="M4 217 408 492" stroke="#55a65c" />
      <path d="M608 489 1278 239" stroke="#8c3a46" />
      <path d="M255 621 475 539V622M529 575 596 621" fill="none" stroke="#aaa" strokeDasharray="1 2" />
      <path d="M475.5 207V539" stroke="#7772c4" />

      <g stroke="#190c91" strokeWidth="1.6" fill="none">
        <path d="M408 492 574 430M650 436 738.5 496M618 207V278" />
      </g>

      <g stroke="#4038b0" strokeWidth="0.9" strokeLinejoin="round">
        <polygon points="547,306 618,278.5 671,315 599.5,341" fill="#d0d0d0" />
        <polygon points="599.5,341 671,315 671,328.5 599.5,355" fill="#f7f7fb" />
        <polygon points="599.5,355 671,328.5 685.5,338 614.5,364.5" fill="#d0d0d0" />
        <polygon points="614.5,364.5 685.5,338 685.5,352 614.5,378.5" fill="#f7f7fb" />
        <polygon points="614.5,378.5 685.5,352 738.5,388 667.5,414" fill="#d0d0d0" />
        <polygon points="614.5,378.5 667.5,414 667.5,428 614.5,392" fill="#dcdcdf" />
        {LOWER_FLIGHT.map((step) => (
          <g key={step.tread}>
            <polygon points={step.tread} fill="#d0d0d0" />
            <polygon points={step.riser} fill="#dcdcdf" />
          </g>
        ))}
        {UPPER_FLIGHT.map((step) => (
          <g key={step.tread}>
            <polygon points={step.riser} fill="#8f8fb0" />
            <polygon points={step.tread} fill="#d2d2d3" />
          </g>
        ))}
        <path d="M475.5 207V525" stroke="#7772c4" />
      </g>

      <g stroke="#190c91" strokeWidth="1.6" fill="none" strokeLinejoin="round">
        <path d="M556 207 408 262.3 528.5 345 738.5 266 652 207" />
        <path d="M408 262V492M528.5 345V575M738.5 266V496L528.5 575 475 539" />
      </g>
      <path d="M408 492 475 539" stroke="#26808e" strokeWidth="1.8" />

      <path d="M829 349V364L832 361 835 367 838 366 835 360H839Z" fill="#fff" stroke="#222" />
    </svg>
  )
}

function StatusBar() {
  const round = 'grid h-5 w-5 place-items-center rounded-full border-2 border-[#777] bg-white'
  return (
    <footer className="flex h-[26px] items-center gap-[10px] pl-[3px]">
      <button type="button" aria-label="Ubicación" className={round}>
        <svg viewBox="0 0 16 16" className="h-4 w-4" fill="#777">
          <circle cx="8" cy="6" r="3.5" />
          <path d="M5 7 8 14 11 7Z" />
        </svg>
      </button>
      <button type="button" aria-label="Créditos" className={round}>
        <svg viewBox="0 0 16 16" className="h-4 w-4" fill="#777">
          <circle cx="8" cy="3.5" r="2" />
          <path d="M5 6H11V10H10V14H6V10H5Z" />
        </svg>
      </button>
      <button type="button" aria-label="Cuenta" className={round}>
        <svg viewBox="0 0 16 16" className="h-4 w-4" fill="#777">
          <circle cx="8" cy="5" r="3.5" />
          <path d="M2 13Q2 9 8 9T14 13L11 15H5Z" />
        </svg>
      </button>
      <div className="flex items-center gap-1">
        <span className="h-3 w-px bg-[#777]" />
        <button
          type="button"
          aria-label="Ayuda"
          className="grid h-5 w-5 place-items-center rounded-full border-2 border-[#10203f] bg-[#214f91] text-[14px] leading-4 font-bold text-white"
        >
          ?
        </button>
      </div>
      <svg viewBox="0 0 10 10" className="mt-auto ml-auto h-[10px] w-[10px]" fill="#aaa">
        <path d="M6 0h2v2H6zM3 3h2v2H3zM6 3h2v2H6zM0 6h2v2H0zM3 6h2v2H3zM6 6h2v2H6z" />
      </svg>
    </footer>
  )
}

export default function App() {
  const [measure, setMeasure] = useState('3,00m ; 0,00m')
  const row = 'flex h-[38px] overflow-hidden border-b border-[#a0a0a0]'

  return (
    <div className="relative flex min-h-screen flex-col overflow-hidden border-t-2 border-l-2 border-[#10244a] bg-[#f0f0f0] font-['Noto_Sans',sans-serif] text-[11px] text-black">
      <time className="absolute -top-[2px] right-0 z-10 h-[19px] w-[142px] bg-black pl-px font-['Liberation_Serif',serif] text-[16px] leading-[19px] font-bold whitespace-pre text-[#3ee63e]">
        1:44:01  03/07/2016
      </time>

      <div className="flex flex-1 flex-col border-l border-[#9fc4dc]">
        <TitleBar />
        <nav className="flex h-[19px] items-center gap-[15px] bg-white pl-[7px]">
          {MENU.map((item) => (
            <button key={item} type="button" className="leading-4">{item}</button>
          ))}
        </nav>

        <div className={clsx(row, 'pl-px')}>
          <Toolbar items={ROWS.files} />
          <ShadowToolbar />
          <Toolbar items={ROWS.location} />
          <Toolbar items={ROWS.warehouse} />
          <Toolbar items={ROWS.sandbox} className="flex-1" />
        </div>

        <div className={clsx(row, 'pl-px')}>
          <Toolbar items={ROWS.styles} />
          <Toolbar items={ROWS.views} />
          <Toolbar items={ROWS.solids} />
          <LayerToolbar />
          <Toolbar items={ROWS.camera} />
          <div className="flex items-center border-r border-[#a0a0a0] pr-[2px]">
            <Grip />
            <Tools items={ROWS.section} />
            <button type="button" aria-label="Mostrar cortes" className="h-[33px] w-[14px] overflow-hidden border border-r-0 border-[#99c9ef] bg-[#cce4f7]">
              <svg viewBox="0 0 14 32" className="h-8 w-[14px]" fill="#1e6f94">
                <path d="M10 15 13 11V23H11V16Z" />
              </svg>
            </button>
          </div>
          <Toolbar items={[['pointHand', 'Interactuar']]} />
        </div>

        <div className={clsx(row, 'pl-6')}>
          <Toolbar items={ROWS.main} />
          <Toolbar items={ROWS.draw} />
          <Toolbar items={ROWS.edit} />
          <Toolbar items={ROWS.construction} />
          <Toolbar items={ROWS.navigation} />
        </div>

        <div className="flex h-[39px] pl-px">
          <Toolbar items={ROWS.architecture} />
        </div>

        <main className="mr-[2px] ml-px flex min-h-0 flex-1 flex-col border-t-2 border-l border-[#777]">
          <Viewport />
        </main>

        <form className="flex h-[39px] w-[297px] items-center border-r border-b border-[#a0a0a0] pl-px" onSubmit={(event) => event.preventDefault()}>
          <Grip />
          <label htmlFor="measure" className="w-[127px] pl-[5px]">Superior ; Inferior:</label>
          <input
            id="measure"
            value={measure}
            onChange={(event) => setMeasure(event.target.value)}
            className="h-[17px] w-[156px] border border-[#999] bg-white"
          />
        </form>
        <StatusBar />
      </div>
    </div>
  )
}
